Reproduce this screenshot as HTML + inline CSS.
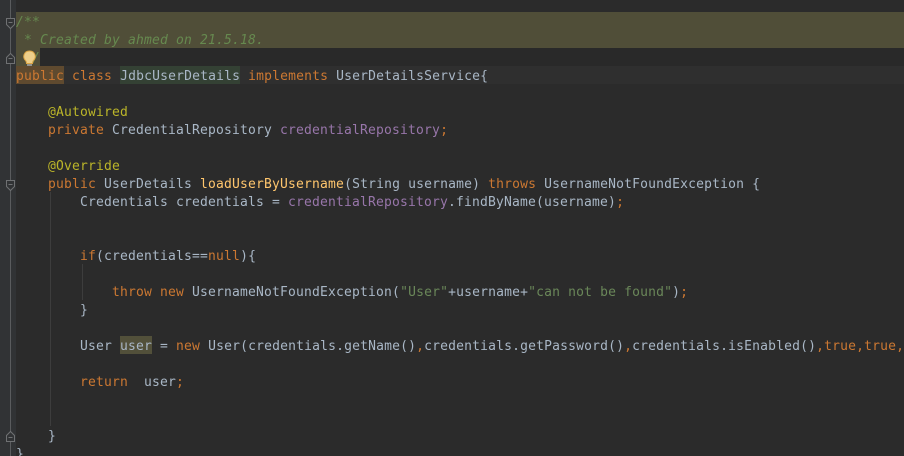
<!DOCTYPE html>
<html><head><meta charset="utf-8">
<style>
html,body{margin:0;padding:0;width:904px;height:456px;overflow:hidden;background:#2b2b2b}
#w{position:relative;width:904px;height:456px;overflow:hidden;background:#2b2b2b;contain:paint}
#g{position:absolute;left:0;top:0;width:16px;height:456px;background:#313335}
.b{position:absolute}
pre{position:absolute;left:16px;margin:0;height:18px;line-height:22px;font-family:"DejaVu Sans Mono","Liberation Mono",monospace;font-size:13px;letter-spacing:.174px;color:#a9b7c6;white-space:pre;filter:blur(.3px)}
.k{color:#cc7832}.c{color:#66894f;font-style:italic}.a{color:#bbb529}.f{color:#ffc66d}.p{color:#9876aa}.s{color:#6a8759}
.h1,.h2,.h3{display:inline-block;height:18px;line-height:22px;vertical-align:top}
.h1{background:#344134}.h2{background:#52503a}.h3{background:#5f4a2f}
</style></head><body><div id="w">
<div id="g"></div>
<div class="b" style="left:16px;top:66px;width:888px;height:18px;background:#2f2f2f"></div>
<div class="b" style="left:16px;top:48px;width:888px;height:18px;background:#292929"></div>
<div class="b" style="left:16px;top:12px;width:888px;height:36px;background:#504e38"></div>
<div class="b" style="left:16px;top:48px;width:24px;height:18px;background:#504e38"></div>
<div class="b" style="left:10px;top:0;width:1px;height:456px;background:#5a5c5e"></div>
<div class="b" style="left:50px;top:192px;width:1px;height:234px;background:#3d3d3d"></div>
<div class="b" style="left:82px;top:264px;width:1px;height:36px;background:#3d3d3d"></div>
<pre style="top:12px"><span class="c">/**</span></pre>
<pre style="top:30px"><span class="c"> * Created by ahmed on 21.5.18.</span></pre>
<pre style="top:48px"><span class="c">  /</span></pre>
<pre style="top:66px"><span class="k h3">public</span> <span class="k">class</span> <span class="h1">JdbcUserDetails</span> <span class="k">implements</span> UserDetailsService{</pre>
<pre style="top:102px">    <span class="a">@Autowired</span></pre>
<pre style="top:120px">    <span class="k">private</span> CredentialRepository <span class="p">credentialRepository</span><span class="k">;</span></pre>
<pre style="top:156px">    <span class="a">@Override</span></pre>
<pre style="top:174px">    <span class="k">public</span> UserDetails <span class="f">loadUserByUsername</span>(String username) <span class="k">throws</span> UsernameNotFoundException {</pre>
<pre style="top:192px">        Credentials credentials = <span class="p">credentialRepository</span>.findByName(username)<span class="k">;</span></pre>
<pre style="top:246px">        <span class="k">if</span>(credentials==<span class="k">null</span>){</pre>
<pre style="top:282px">            <span class="k">throw new</span> UsernameNotFoundException(<span class="s">"User"</span>+username+<span class="s">"can not be found"</span>)<span class="k">;</span></pre>
<pre style="top:300px">        }</pre>
<pre style="top:336px">        User <span class="h2">user</span> = <span class="k">new</span> User(credentials.getName()<span class="k">,</span>credentials.getPassword()<span class="k">,</span>credentials.isEnabled()<span class="k">,true,true,</span></pre>
<pre style="top:372px">        <span class="k">return</span>  user<span class="k">;</span></pre>
<pre style="top:426px">    }</pre>
<pre style="top:444px">}</pre>
<svg class="b" style="left:0;top:0" width="40" height="456" fill="none" stroke="#6f7173" stroke-width="1">
<path d="M6.500 18.500h8v6l-4 4-4-4zM8.500 22.500h4" fill="#313335"/>
<path d="M6.500 63.500h8v-6l-4-4-4 4zM8.500 58.500h4" fill="#313335"/>
<path d="M6.500 180.500h8v6l-4 4-4-4zM8.500 184.500h4" fill="#313335"/>
<path d="M6.500 441.500h8v-6l-4-4-4 4zM8.500 437.500h4" fill="#313335"/>
<path d="M29.500 51a5.500 5.500 0 0 1 4 9.500c-1 1-1 2-1 3h-6c0-1 0-2-1-3a5.500 5.500 0 0 1 4-9.500z" fill="#edcf8a" stroke="#d9a343"/>
<path d="M27 65h5" stroke="#a9a9a9" stroke-width="1.500"/>
</svg>
</div></body></html>
